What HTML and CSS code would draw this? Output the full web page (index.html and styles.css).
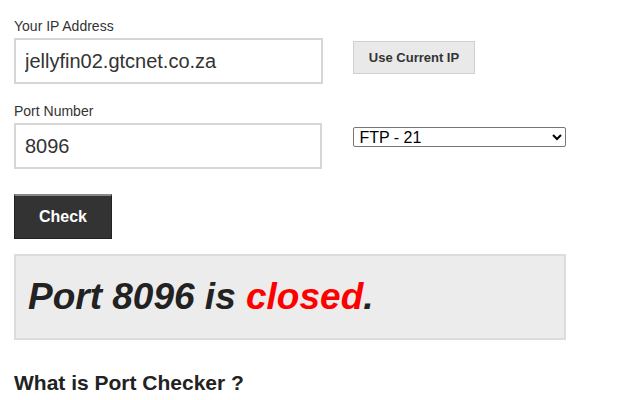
FILE: index.html
```html
<!DOCTYPE html>
<html lang="en">
<head>
  <meta charset="UTF-8" />
  <meta name="viewport" content="width=device-width, initial-scale=1" />
  <title>Open Port Checker</title>
  <link rel="stylesheet" href="styles.css">
</head>
<body>
  <div class="checker">
    <form class="form">
      <div class="row">
        <div class="field">
          <label for="host">Your IP Address</label>
          <input id="host" type="text" value="jellyfin02.gtcnet.co.za" />
        </div>
        <button type="button" class="btn-ip">Use Current IP</button>
      </div>

      <div class="row">
        <div class="field">
          <label for="port">Port Number</label>
          <input id="port" type="text" value="8096" />
        </div>
        <select class="ports">
          <option>FTP - 21</option>
          <option>SSH - 22</option>
          <option>HTTP - 80</option>
        </select>
      </div>

      <button type="button" class="btn-check">Check</button>
    </form>

    <div class="result">
      <p>Port 8096 is <span class="closed">closed</span>.</p>
    </div>

    <h2>What is Port Checker ?</h2>
  </div>
</body>
</html>
```

FILE: styles.css
```css
body {
  margin: 0;
  padding: 18px 14px 0 14px;
  font-family: "Liberation Sans", Arial, sans-serif;
  color: #333;
  background: #fff;
}

.checker {
  width: 552px;
}

.row {
  display: flex;
  gap: 31px;
  margin-bottom: 19px;
}

.field {
  display: flex;
  flex-direction: column;
  width: 309px;
}

.field label {
  font-size: 14px;
  line-height: 16px;
  margin-bottom: 4px;
  color: #333;
}

.field input {
  box-sizing: border-box;
  height: 46px;
  width: 100%;
  border: 2px solid #d6d6d6;
  padding: 0 9px;
  font-family: "Liberation Sans", Arial, sans-serif;
  font-size: 20px;
  color: #333;
  outline: none;
}

.btn-ip {
  align-self: flex-start;
  margin-top: 23px;
  margin-left: -1px;
  height: 33px;
  width: 122px;
  background: #e9e9e9;
  border: 1px solid #d0d0d0;
  font-family: "Liberation Sans", Arial, sans-serif;
  font-weight: bold;
  font-size: 13px;
  color: #333;
  padding: 0;
}

.ports {
  align-self: flex-start;
  margin-top: 24px;
  width: 213px;
  height: 20px;
  font-family: "Liberation Sans", Arial, sans-serif;
  font-size: 16px;
  color: #000;
  background: #fff;
  border: 1px solid #767676;
  border-radius: 2px;
  padding: 0 0 0 1px;
}

.btn-check {
  display: block;
  margin-top: 25px;
  width: 98px;
  height: 45px;
  background: #333;
  color: #fff;
  border: 1px solid #222;
  border-top: 2px solid #888;
  font-family: "Liberation Sans", Arial, sans-serif;
  font-weight: bold;
  font-size: 16px;
  padding: 0;
}

.result {
  margin-top: 15px;
  height: 86px;
  box-sizing: border-box;
  background: #ececec;
  border: 2px solid #dcdcdc;
  display: flex;
  align-items: center;
  padding: 0 12px;
}

.result p {
  margin: 0;
  font-size: 37px;
  font-weight: bold;
  font-style: italic;
  color: #222;
}

.result .closed {
  color: #f00;
}

h2 {
  margin: 31px 0 0 0;
  font-size: 21px;
  color: #222;
}
```
